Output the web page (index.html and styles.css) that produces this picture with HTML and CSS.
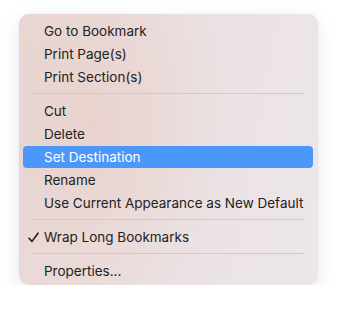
FILE: index.html
```html
<!DOCTYPE html>
<html lang="en">

<head>
  <meta charset="UTF-8">
  <meta name="viewport" content="width=device-width, initial-scale=1.0">
  <title>Bookmark Menu</title>
  <link rel="stylesheet" href="styles.css">
</head>

<body>
  <!-- Context menu -->
  <div class="menu" role="menu">
    <div class="item" role="menuitem"><span class="mark"></span>Go to Bookmark</div>
    <div class="item" role="menuitem"><span class="mark"></span>Print Page(s)</div>
    <div class="item" role="menuitem"><span class="mark"></span>Print Section(s)</div>
    <div class="separator"></div>
    <div class="item" role="menuitem"><span class="mark"></span>Cut</div>
    <div class="item" role="menuitem"><span class="mark"></span>Delete</div>
    <div class="item active" role="menuitem"><span class="mark"></span>Set Destination</div>
    <div class="item" role="menuitem"><span class="mark"></span>Rename</div>
    <div class="item" role="menuitem"><span class="mark"></span>Use Current Appearance as New Default</div>
    <div class="separator"></div>
    <div class="item" role="menuitemcheckbox" aria-checked="true">
      <span class="mark">
        <svg width="11" height="11" viewBox="0 0 11 11">
          <path d="M1 6.2 L4 9.4 L10 1.2" fill="none" stroke="#1f1f1f" stroke-width="1.6" stroke-linecap="round" stroke-linejoin="round"/>
        </svg>
      </span>Wrap Long Bookmarks
    </div>
    <div class="separator"></div>
    <div class="item" role="menuitem"><span class="mark"></span>Properties...</div>
  </div>
</body>

</html>
```

FILE: styles.css
```css
/* Page */
body {
  margin: 0;
  background: #fff;
  font-family: Inter, "Liberation Sans", sans-serif;
}

/* Menu panel */
.menu {
  margin: 14px 0 0 19px;
  width: 299px;
  height: 271px;
  box-sizing: border-box;
  padding: 6px 5px 0 4px;
  display: flex;
  flex-direction: column;
  gap: 1px;
  border-radius: 10px;
  background:
    radial-gradient(ellipse 140px 200px at 70px 110px, rgba(232, 208, 203, 0.8), rgba(232, 208, 203, 0) 100%),
    linear-gradient(100deg, #e9d8d4 0%, #ebe1e2 55%, #ece6ea 100%);
  box-shadow: 0 6px 18px rgba(110, 125, 170, 0.18), 0 0 2px rgba(0, 0, 0, 0.06);
}

/* Menu rows */
.item {
  display: flex;
  align-items: center;
  height: 22px;
  padding-left: 5px;
  border-radius: 4px;
  font-size: 13.5px;
  color: #222;
  white-space: nowrap;
}

.item.active {
  background: #4c98fa;
  color: #fff;
}

/* Check mark column */
.mark {
  display: flex;
  align-items: center;
  width: 16px;
  flex-shrink: 0;
}

/* Divider line */
.separator {
  height: 1px;
  margin: 4px 9px 5px;
  background: #d3c7c7;
}
```
